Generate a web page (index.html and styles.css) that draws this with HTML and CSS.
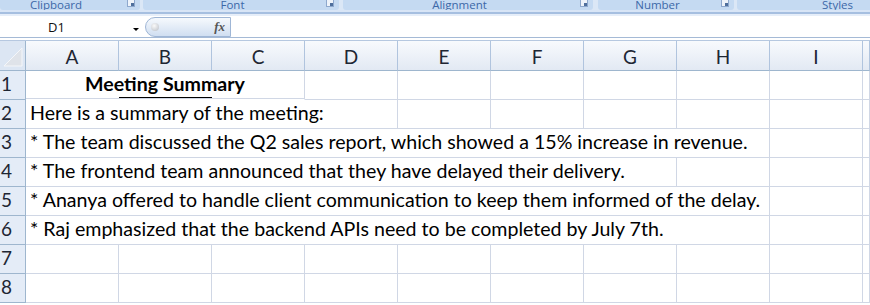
FILE: index.html
```html
<!DOCTYPE html>
<html>
<head>
    <meta charset="UTF-8">
    <title>Meeting Summary - Excel</title>
    <link rel="stylesheet" href="styles.css">
</head>
<body>
    <div class="ribbon">
        <div class="group g-clip"><span>Clipboard</span><i class="launch"></i></div>
        <div class="group g-font"><span>Font</span><i class="launch"></i></div>
        <div class="group g-align"><span>Alignment</span><i class="launch"></i></div>
        <div class="group g-num"><span>Number</span><i class="launch"></i></div>
        <div class="group g-styles"><span>Styles</span></div>
    </div>
    <div class="ribbon-foot"></div>

    <div class="fbar">
        <div class="namebox"><span class="ref">D1</span><span class="caret"></span></div>
        <div class="fxpill"><span class="knob"></span><span class="fx">fx</span></div>
        <div class="finput"></div>
    </div>

    <div class="sheet">
        <div class="row head">
            <div class="corner">
                <svg width="25" height="29" viewBox="0 0 25 29"><polygon points="4,25 22,25 22,7" fill="#dfe3e9" stroke="#f4f6f9" stroke-width="1"/></svg>
            </div>
            <div class="col">A</div>
            <div class="col">B</div>
            <div class="col">C</div>
            <div class="col">D</div>
            <div class="col">E</div>
            <div class="col">F</div>
            <div class="col">G</div>
            <div class="col">H</div>
            <div class="col">I</div>
            <div class="col"></div>
        </div>

        <div class="row">
            <div class="rn">1</div>
            <div class="cell title span3">Meeting Summary</div>
            <div class="cell"></div><div class="cell"></div><div class="cell"></div>
            <div class="cell"></div><div class="cell"></div><div class="cell"></div><div class="cell"></div>
        </div>
        <div class="row">
            <div class="rn">2</div>
            <div class="cell span4">Here is a summary of the meeting:</div>
            <div class="cell"></div><div class="cell"></div><div class="cell"></div>
            <div class="cell"></div><div class="cell"></div><div class="cell"></div>
        </div>
        <div class="row">
            <div class="rn">3</div>
            <div class="cell span8">* The team discussed the Q2 sales report, which showed a 15% increase in revenue.</div>
            <div class="cell"></div><div class="cell"></div>
        </div>
        <div class="row">
            <div class="rn">4</div>
            <div class="cell span7">* The frontend team announced that they have delayed their delivery.</div>
            <div class="cell"></div><div class="cell"></div><div class="cell"></div>
        </div>
        <div class="row">
            <div class="rn">5</div>
            <div class="cell span8">* Ananya offered to handle client communication to keep them informed of the delay.</div>
            <div class="cell"></div><div class="cell"></div>
        </div>
        <div class="row">
            <div class="rn">6</div>
            <div class="cell span8">* Raj emphasized that the backend APIs need to be completed by July 7th.</div>
            <div class="cell"></div><div class="cell"></div>
        </div>
        <div class="row">
            <div class="rn">7</div>
            <div class="cell"></div><div class="cell"></div><div class="cell"></div><div class="cell"></div><div class="cell"></div>
            <div class="cell"></div><div class="cell"></div><div class="cell"></div><div class="cell"></div><div class="cell"></div>
        </div>
        <div class="row">
            <div class="rn">8</div>
            <div class="cell"></div><div class="cell"></div><div class="cell"></div><div class="cell"></div><div class="cell"></div>
            <div class="cell"></div><div class="cell"></div><div class="cell"></div><div class="cell"></div><div class="cell"></div>
        </div>
    </div>
</body>
</html>
```

FILE: styles.css
```css
html,
body {
    margin: 0;
    padding: 0;
}
body {
    width: 870px;
    height: 305px;
    overflow: hidden;
    background: #fff;
    font-family: Lato, "Noto Sans", sans-serif;
}

/* ribbon strip (group captions) */
.ribbon {
    display: flex;
    gap: 3px;
    height: 10px;
    background: #dbe7f6;
    overflow: hidden;
}

.group {
    position: relative;
    flex: none;
    height: 10px;
    padding-right: 17px;
    box-sizing: border-box;
    background: #c5daf2;
    border-radius: 0 0 3px 3px;
    text-align: center;
    color: #3c68a8;
    font-family: "Open Sans", sans-serif;
    font-size: 11.5px;
}

.group span {
    display: block;
    line-height: 11px;
    margin-top: -1px;
}

.g-clip {
    width: 140px;
    padding-right: 28px;
}
.g-font {
    width: 196px;
}
.g-align {
    width: 250px;
    margin-left: 1px;
}
.g-num {
    width: 136px;
    margin-left: 2px;
}
.g-styles {
    flex: 1;
    padding-right: 0;
    padding-left: 8px;
    margin-right: -60px;
}

.launch {
    position: absolute;
    right: 5px;
    top: 0;
    width: 6px;
    height: 6px;
    border: 1px solid #8ea8cd;
    border-top: 0;
    background: linear-gradient(#4f6f9c, #4f6f9c) 100% 100% / 3px 3px no-repeat, #eef3fa;
}

.ribbon-foot {
    height: 6px;
    background: linear-gradient(#d8e5f6 0, #d8e5f6 2px, #a6bfe0 2px, #a6bfe0 4px, #e6eef9 4px);
}

/* formula bar */
.fbar {
    display: flex;
    height: 21px;
    border-bottom: 1px solid #a5bad6;
    margin-bottom: 2px;
}

.namebox {
    display: flex;
    align-items: flex-start;
    width: 143px;
    padding-top: 2px;
    box-sizing: border-box;
    font-family: "Open Sans", sans-serif;
    font-size: 13px;
    line-height: 19px;
    color: #111;
}

.ref {
    width: 113px;
    text-align: center;
}

.caret {
    margin: 10px 0 0 20px;
    border-left: 3px solid transparent;
    border-right: 3px solid transparent;
    border-top: 3px solid #000;
}

.fxpill {
    display: flex;
    align-items: center;
    width: 86px;
    height: 20px;
    margin: 1px 0 0 2px;
    box-sizing: border-box;
    border: 1px solid #9fb6d6;
    border-radius: 10px 0 0 10px;
    background: linear-gradient(#f6f9fd, #d0def1);
}

.knob {
    width: 8px;
    height: 8px;
    margin-left: 5px;
    border-radius: 50%;
    background: radial-gradient(circle at 40% 35%, #fafafa, #b9bec6);
}

.fx {
    margin-left: auto;
    margin-right: 5px;
    font-family: "Liberation Serif", serif;
    font-style: italic;
    font-weight: bold;
    font-size: 13px;
    color: #555;
}

.finput {
    flex: 1;
}

/* sheet */
.row {
    display: grid;
    grid-template-columns: 26px repeat(9, 93px) 1fr;
    height: 29px;
}

.row.head {
    height: 31px;
    border-top: 1px solid #b6c8e0;
    box-sizing: border-box;
}

.corner {
    border-right: 1px solid #9eb6ce;
    border-bottom: 1px solid #9eb6ce;
    background: #dce6f3;
}
.corner svg {
    display: block;
}

.col {
    display: flex;
    align-items: center;
    justify-content: center;
    border-right: 1px solid #b0c4de;
    border-bottom: 1px solid #9eb6ce;
    background: linear-gradient(#f8fafd, #e2e9f3);
    font-size: 19px;
    color: #1e2633;
    padding-top: 1px;
}

.rn {
    display: flex;
    align-items: flex-end;
    padding: 0 0 4px 1px;
    border-right: 1px solid #9eb6ce;
    border-bottom: 1px solid #9eb6ce;
    background: #e4ecf7;
    font-size: 19px;
    color: #1e2633;
}

.cell {
    display: flex;
    align-items: flex-end;
    min-width: 0;
    padding: 0 0 4px 4px;
    border-right: 1px solid #d0d7e5;
    border-bottom: 1px solid #d0d7e5;
    white-space: nowrap;
    font-size: 19.6px;
    color: #000;
}

.span3 { grid-column: span 3; }
.span4 { grid-column: span 4; }
.span7 { grid-column: span 7; }
.span8 { grid-column: span 8; }

.title {
    justify-content: center;
    padding-left: 0;
    font-weight: bold;
    border-bottom-color: transparent;
    background: linear-gradient(#d0d7e5, #d0d7e5) 0 100% / 100% 1px no-repeat,
                linear-gradient(#000, #000) 93px 100% / 93px 2px no-repeat;
}
```
